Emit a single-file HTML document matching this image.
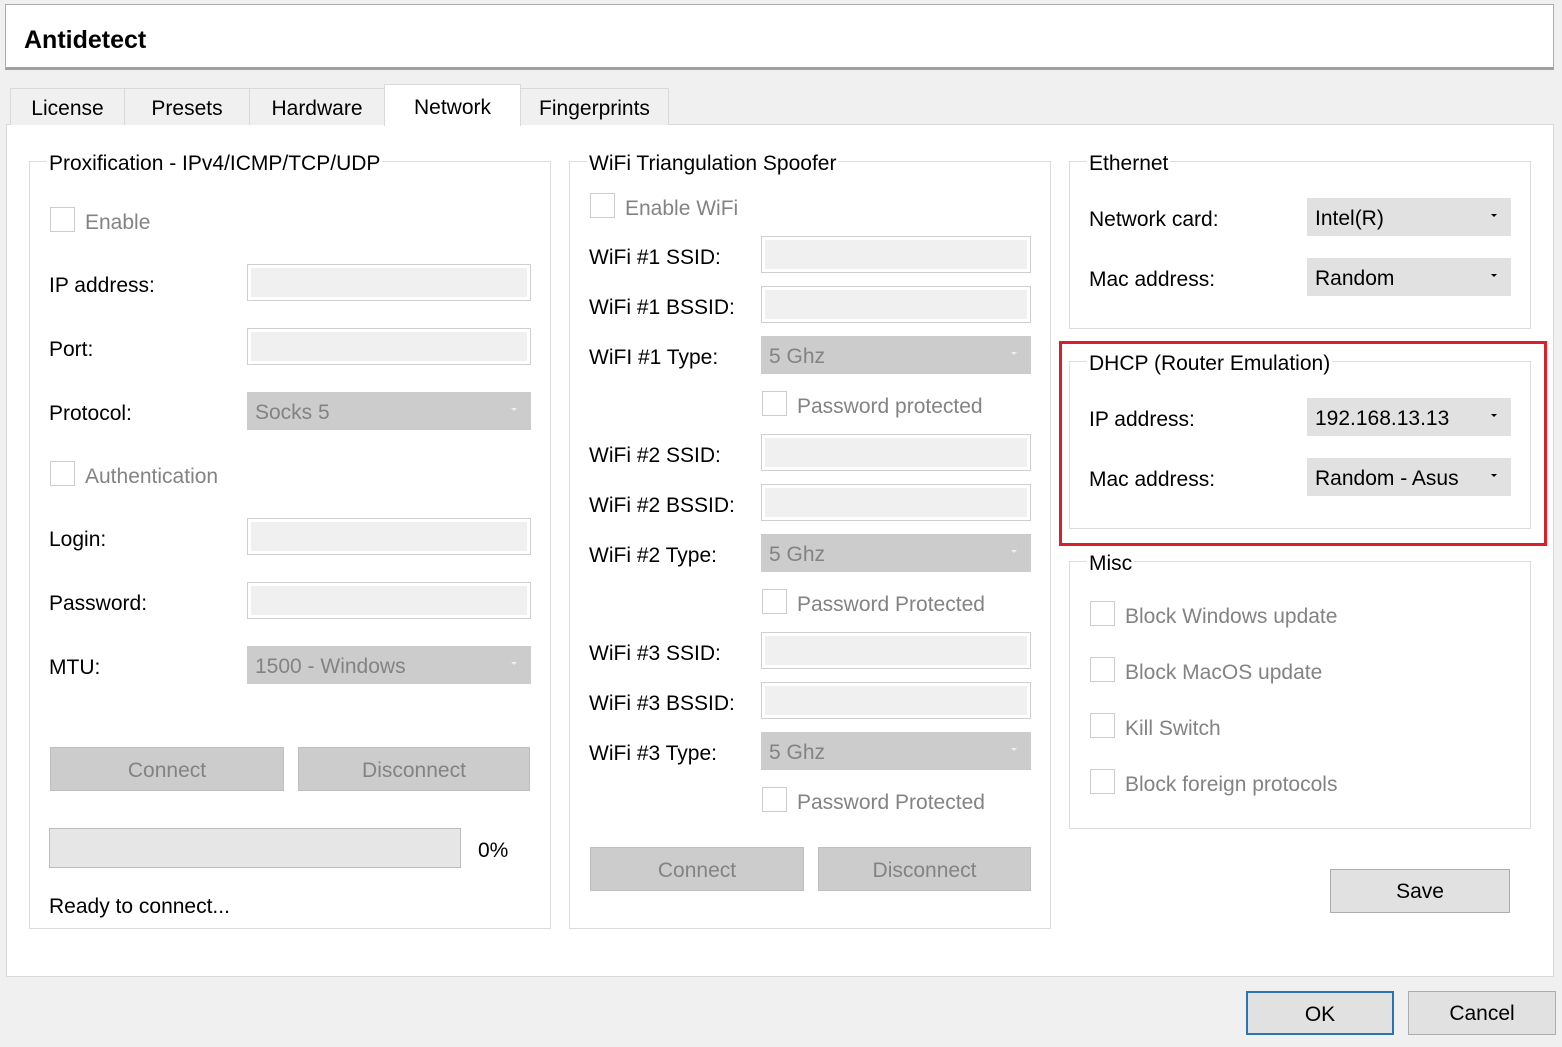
<!DOCTYPE html>
<html><head><meta charset="utf-8"><style>
*{box-sizing:border-box;margin:0;padding:0}
body{width:1562px;height:1047px;background:#f0f0f0;position:relative;overflow:hidden;font-family:"Liberation Sans",sans-serif;font-size:21px;color:#000}
div{position:absolute}
.t{line-height:24px;white-space:nowrap;margin-top:2px}
.d{color:#838383}
.hdr{left:5px;top:4px;width:1549px;height:66px;background:#fff;border:1px solid #adadad;border-bottom:3px solid #a0a0a0}
.tab{top:88px;height:37px;border:1px solid #d9d9d9;border-bottom:none;background:#f0f0f0;text-align:center;line-height:40px}
.panel{left:6px;top:124px;width:1548px;height:853px;background:#fff;border:1px solid #d9d9d9}
.grp{border:1px solid #dcdcdc}
.gt{background:#fff;padding:0 2px;line-height:24px;white-space:nowrap;margin-top:2px}
.inp{border:1px solid #cfcfcf;background:#fff}
.inp::after{content:"";position:absolute;left:3px;top:3px;right:3px;bottom:3px;background:#f0f0f0}
.cb{width:25px;height:25px;border:1px solid #cccccc;background:#fff}
.cmb{background:#cccccc;color:#838383;padding-left:8px;line-height:41px}
.cmb2{background:#e1e1e1;color:#000;padding-left:8px;line-height:41px}
.arr{right:14px;top:16px;width:0;height:0;border-left:3px solid transparent;border-right:3px solid transparent;border-top:3px solid #000}
.cmb .arr{border-top-color:#eee}
.btn{background:#cccccc;border:1px solid #bfbfbf;color:#838383;text-align:center}
.btn2{background:#e1e1e1;border:1px solid #adadad;text-align:center}
</style></head><body>
<div class="hdr"><div class="t" style="left:18px;top:21px;font-weight:bold;font-size:25px">Antidetect</div></div>
<div class="panel"></div>
<div class="tab" style="left:10px;width:115px">License</div>
<div class="tab" style="left:124px;width:126px">Presets</div>
<div class="tab" style="left:249px;width:136px">Hardware</div>
<div class="tab" style="left:384px;top:84px;height:42px;width:137px;background:#fff;line-height:45px;z-index:2;">Network</div>
<div class="tab" style="left:520px;width:149px">Fingerprints</div>

<div class="grp" style="left:29px;top:161px;width:522px;height:768px"></div>
<div class="gt" style="left:47px;top:150px">Proxification - IPv4/ICMP/TCP/UDP</div>
<div class="cb" style="left:50px;top:207px"></div><div class="t d" style="left:85px;top:209px">Enable</div>
<div class="t" style="left:49px;top:272px">IP address:</div><div class="inp" style="left:247px;top:264px;width:284px;height:37px"></div>
<div class="t" style="left:49px;top:336px">Port:</div><div class="inp" style="left:247px;top:328px;width:284px;height:37px"></div>
<div class="t" style="left:49px;top:400px">Protocol:</div><div class="cmb" style="left:247px;top:392px;width:284px;height:38px">Socks 5<div class="arr"></div></div>
<div class="cb" style="left:50px;top:461px"></div><div class="t d" style="left:85px;top:463px">Authentication</div>
<div class="t" style="left:49px;top:526px">Login:</div><div class="inp" style="left:247px;top:518px;width:284px;height:37px"></div>
<div class="t" style="left:49px;top:590px">Password:</div><div class="inp" style="left:247px;top:582px;width:284px;height:37px"></div>
<div class="t" style="left:49px;top:654px">MTU:</div><div class="cmb" style="left:247px;top:646px;width:284px;height:38px">1500 - Windows<div class="arr"></div></div>
<div class="btn" style="left:50px;top:747px;width:234px;height:44px;line-height:46px">Connect</div>
<div class="btn" style="left:298px;top:747px;width:232px;height:44px;line-height:46px">Disconnect</div>
<div style="left:49px;top:828px;width:412px;height:40px;background:#e6e6e6;border:1px solid #bcbcbc"></div>
<div class="t" style="left:478px;top:837px">0%</div>
<div class="t" style="left:49px;top:893px">Ready to connect...</div>

<div class="grp" style="left:569px;top:161px;width:482px;height:768px"></div>
<div class="gt" style="left:587px;top:150px">WiFi Triangulation Spoofer</div>
<div class="cb" style="left:590px;top:193px"></div><div class="t d" style="left:625px;top:195px">Enable WiFi</div>
<div class="t" style="left:589px;top:244px">WiFi #1 SSID:</div><div class="inp" style="left:761px;top:236px;width:270px;height:37px"></div>
<div class="t" style="left:589px;top:294px">WiFi #1 BSSID:</div><div class="inp" style="left:761px;top:286px;width:270px;height:37px"></div>
<div class="t" style="left:589px;top:344px">WiFI #1 Type:</div><div class="cmb" style="left:761px;top:336px;width:270px;height:38px">5 Ghz<div class="arr"></div></div>
<div class="cb" style="left:762px;top:391px"></div><div class="t d" style="left:797px;top:393px">Password protected</div>
<div class="t" style="left:589px;top:442px">WiFi #2 SSID:</div><div class="inp" style="left:761px;top:434px;width:270px;height:37px"></div>
<div class="t" style="left:589px;top:492px">WiFi #2 BSSID:</div><div class="inp" style="left:761px;top:484px;width:270px;height:37px"></div>
<div class="t" style="left:589px;top:542px">WiFi #2 Type:</div><div class="cmb" style="left:761px;top:534px;width:270px;height:38px">5 Ghz<div class="arr"></div></div>
<div class="cb" style="left:762px;top:589px"></div><div class="t d" style="left:797px;top:591px">Password Protected</div>
<div class="t" style="left:589px;top:640px">WiFi #3 SSID:</div><div class="inp" style="left:761px;top:632px;width:270px;height:37px"></div>
<div class="t" style="left:589px;top:690px">WiFi #3 BSSID:</div><div class="inp" style="left:761px;top:682px;width:270px;height:37px"></div>
<div class="t" style="left:589px;top:740px">WiFi #3 Type:</div><div class="cmb" style="left:761px;top:732px;width:270px;height:38px">5 Ghz<div class="arr"></div></div>
<div class="cb" style="left:762px;top:787px"></div><div class="t d" style="left:797px;top:789px">Password Protected</div>
<div class="btn" style="left:590px;top:847px;width:214px;height:44px;line-height:46px">Connect</div>
<div class="btn" style="left:818px;top:847px;width:213px;height:44px;line-height:46px">Disconnect</div>

<div class="grp" style="left:1069px;top:161px;width:462px;height:168px"></div>
<div class="gt" style="left:1087px;top:150px">Ethernet</div>
<div class="t" style="left:1089px;top:206px">Network card:</div><div class="cmb2" style="left:1307px;top:198px;width:204px;height:38px">Intel(R)<div class="arr"></div></div>
<div class="t" style="left:1089px;top:266px">Mac address:</div><div class="cmb2" style="left:1307px;top:258px;width:204px;height:38px">Random<div class="arr"></div></div>

<div class="grp" style="left:1069px;top:361px;width:462px;height:168px"></div>
<div class="gt" style="left:1087px;top:350px">DHCP (Router Emulation)</div>
<div class="t" style="left:1089px;top:406px">IP address:</div><div class="cmb2" style="left:1307px;top:398px;width:204px;height:38px">192.168.13.13<div class="arr"></div></div>
<div class="t" style="left:1089px;top:466px">Mac address:</div><div class="cmb2" style="left:1307px;top:458px;width:204px;height:38px">Random - Asus<div class="arr"></div></div>
<div style="left:1059px;top:341px;width:488px;height:205px;border:3px solid #d8202a"></div>

<div class="grp" style="left:1069px;top:561px;width:462px;height:268px"></div>
<div class="gt" style="left:1087px;top:550px">Misc</div>
<div class="cb" style="left:1090px;top:601px"></div><div class="t d" style="left:1125px;top:603px">Block Windows update</div>
<div class="cb" style="left:1090px;top:657px"></div><div class="t d" style="left:1125px;top:659px">Block MacOS update</div>
<div class="cb" style="left:1090px;top:713px"></div><div class="t d" style="left:1125px;top:715px">Kill Switch</div>
<div class="cb" style="left:1090px;top:769px"></div><div class="t d" style="left:1125px;top:771px">Block foreign protocols</div>

<div class="btn2" style="left:1330px;top:869px;width:180px;height:44px;line-height:44px">Save</div>
<div class="btn2" style="left:1246px;top:991px;width:148px;height:44px;line-height:44px;border:2px solid #2a74b6">OK</div>
<div class="btn2" style="left:1408px;top:991px;width:148px;height:44px;line-height:44px">Cancel</div>
</body></html>
